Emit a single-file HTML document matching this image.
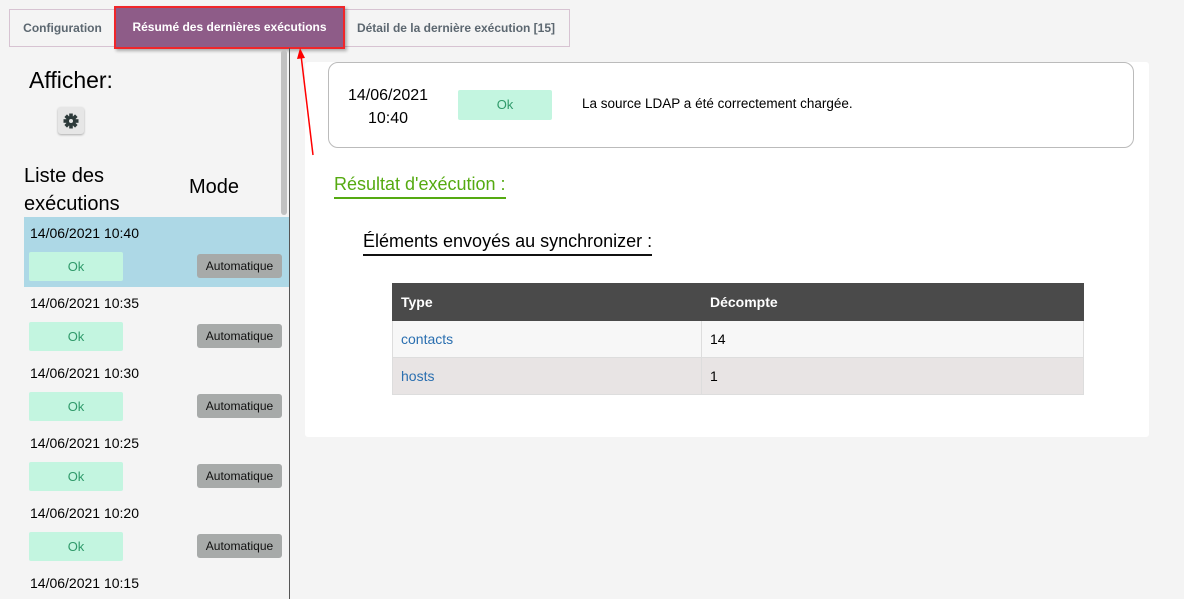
<!DOCTYPE html>
<html><head><meta charset="utf-8"><style>
*{box-sizing:border-box;margin:0;padding:0}
body{width:1184px;height:599px;background:#f4f4f4;font-family:"Liberation Sans",sans-serif;position:relative;overflow:hidden;color:#000}
.a{position:absolute}
.tab{position:absolute;top:9px;height:38px;border:1px solid #d7c3d2;background:#f4f4f4;color:#5c6770;font-size:12px;font-weight:bold;line-height:36px;text-align:center}
.ok{position:absolute;background:#c3f5e0;color:#2f9a6a;font-size:13px;text-align:center;border-radius:2px}
.auto{position:absolute;left:197px;width:85px;height:24px;background:#a7aaa9;border-radius:3px;font-size:12px;line-height:24px;text-align:center;color:#111}
.dt{position:absolute;left:30px;font-size:14px}
td,th{border:1px solid #ddd;padding:0 8px;font-size:14px;text-align:left}
</style></head><body>
<div class="tab" style="left:9px;width:107px">Configuration</div>
<div class="tab" style="left:343px;width:227px;border-left:none">Détail de la dernière exécution [15]</div>
<div class="a" style="left:114px;top:6px;width:231px;height:43px;border:2px solid #f0262a;background:#8e5c88;color:#fff;font-size:12px;font-weight:bold;line-height:39px;text-align:center;box-shadow:2px 2px 3px rgba(0,0,0,.3)">Résumé des dernières exécutions</div>

<div class="a" style="left:289px;top:48px;width:1px;height:551px;background:#555"></div>
<div class="a" style="left:281px;top:50px;width:6px;height:165px;background:#c1c1c1;border-radius:3px"></div>
<div class="a" style="left:29px;top:67px;font-size:23px">Afficher:</div>
<div class="a" style="left:58px;top:107px;width:26px;height:27px;background:#e6e6e6;border-radius:3px;box-shadow:0 1px 2px rgba(0,0,0,.3)">
<svg width="26" height="27" viewBox="0 0 26 27"><g transform="translate(13,14)" fill="#2d3a3a"><circle r="5"/><rect x="-1.8" y="-7.5" width="3.6" height="15"/><rect x="-1.8" y="-7.5" width="3.6" height="15" transform="rotate(45)"/><rect x="-1.8" y="-7.5" width="3.6" height="15" transform="rotate(90)"/><rect x="-1.8" y="-7.5" width="3.6" height="15" transform="rotate(135)"/><circle r="2" fill="#e6e6e6"/></g></svg></div>
<div class="a" style="left:24px;top:162px;font-size:20px;line-height:28px">Liste des<br>exécutions</div>
<div class="a" style="left:189px;top:176px;font-size:20px">Mode</div>

<div class="a" style="left:24px;top:217px;width:265px;height:70px;background:#add8e6"></div>
<div class="dt" style="top:225px">14/06/2021 10:40</div><div class="ok" style="left:29px;top:252px;width:94px;height:29px;line-height:29px">Ok</div><div class="auto" style="top:254px">Automatique</div>
<div class="dt" style="top:295px">14/06/2021 10:35</div><div class="ok" style="left:29px;top:322px;width:94px;height:29px;line-height:29px">Ok</div><div class="auto" style="top:324px">Automatique</div>
<div class="dt" style="top:365px">14/06/2021 10:30</div><div class="ok" style="left:29px;top:392px;width:94px;height:29px;line-height:29px">Ok</div><div class="auto" style="top:394px">Automatique</div>
<div class="dt" style="top:435px">14/06/2021 10:25</div><div class="ok" style="left:29px;top:462px;width:94px;height:29px;line-height:29px">Ok</div><div class="auto" style="top:464px">Automatique</div>
<div class="dt" style="top:505px">14/06/2021 10:20</div><div class="ok" style="left:29px;top:532px;width:94px;height:29px;line-height:29px">Ok</div><div class="auto" style="top:534px">Automatique</div>
<div class="dt" style="top:575px">14/06/2021 10:15</div>

<div class="a" style="left:305px;top:62px;width:844px;height:375px;background:#fff;border-radius:3px"></div>
<div class="a" style="left:328px;top:62px;width:806px;height:86px;border:1px solid #bbb;border-radius:10px;background:#fff"></div>
<div class="a" style="left:340px;top:84px;width:96px;text-align:center;font-size:16px;line-height:23px">14/06/2021<br>10:40</div>
<div class="ok" style="left:458px;top:90px;width:94px;height:30px;line-height:29px">Ok</div>
<div class="a" style="left:582px;top:96px;font-size:13.5px">La source LDAP a été correctement chargée.</div>
<div class="a" style="left:334px;top:174px;font-size:18px;color:#55aa11;border-bottom:2px solid #55aa11;padding-bottom:2px">Résultat d'exécution :</div>
<div class="a" style="left:363px;top:231px;font-size:18px;border-bottom:2px solid #111;padding-bottom:2px">Éléments envoyés au synchronizer :</div>
<table class="a" style="left:392px;top:283px;width:692px;border-collapse:collapse">
<tr style="background:#4a4a4a;color:#fff;height:37px"><th style="width:309px;border-color:#4a4a4a">Type</th><th style="border-color:#4a4a4a">Décompte</th></tr>
<tr style="background:#f7f7f7;height:37px"><td style="color:#2a6fb0">contacts</td><td>14</td></tr>
<tr style="background:#e8e4e4;height:37px"><td style="color:#2a6fb0">hosts</td><td>1</td></tr>
</table>
<svg class="a" style="left:295px;top:45px" width="25" height="115"><line x1="18" y1="110" x2="6" y2="10" stroke="#f00" stroke-width="1.5"/><polygon points="5,3 2,14 10,13" fill="#f00"/></svg>
</body></html>
